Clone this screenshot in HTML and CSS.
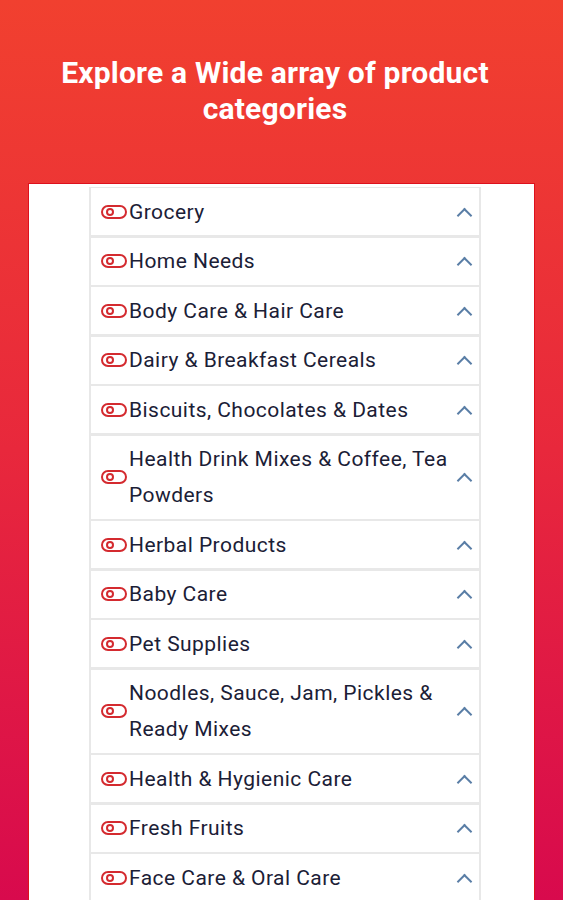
FILE: index.html
```html
<!DOCTYPE html>
<html lang="en">
<head>
<meta charset="utf-8">
<title>Categories</title>
<link rel="stylesheet" href="styles.css">
</head>
<body>
<div class="page">
  <h1 class="title">Explore a Wide array of product categories</h1>
  <div class="panel">
    <ul class="list">
      <li class="row"><span class="ic"></span><span class="label">Grocery</span><span class="chev"></span></li>
      <li class="row"><span class="ic"></span><span class="label">Home Needs</span><span class="chev"></span></li>
      <li class="row"><span class="ic"></span><span class="label">Body Care &amp; Hair Care</span><span class="chev"></span></li>
      <li class="row"><span class="ic"></span><span class="label">Dairy &amp; Breakfast Cereals</span><span class="chev"></span></li>
      <li class="row"><span class="ic"></span><span class="label">Biscuits, Chocolates &amp; Dates</span><span class="chev"></span></li>
      <li class="row"><span class="ic"></span><span class="label">Health Drink Mixes &amp; Coffee, Tea Powders</span><span class="chev"></span></li>
      <li class="row"><span class="ic"></span><span class="label">Herbal Products</span><span class="chev"></span></li>
      <li class="row"><span class="ic"></span><span class="label">Baby Care</span><span class="chev"></span></li>
      <li class="row"><span class="ic"></span><span class="label">Pet Supplies</span><span class="chev"></span></li>
      <li class="row"><span class="ic"></span><span class="label">Noodles, Sauce, Jam, Pickles &amp; Ready Mixes</span><span class="chev"></span></li>
      <li class="row"><span class="ic"></span><span class="label">Health &amp; Hygienic Care</span><span class="chev"></span></li>
      <li class="row"><span class="ic"></span><span class="label">Fresh Fruits</span><span class="chev"></span></li>
      <li class="row"><span class="ic"></span><span class="label">Face Care &amp; Oral Care</span><span class="chev"></span></li>
    </ul>
  </div>
</div>
</body>
</html>
```
FILE: styles.css
```css
html, body {
  margin: 0;
  padding: 0;
  height: 100%;
  overflow: hidden;
}
body {
  font-family: Roboto, "Liberation Sans", sans-serif;
}
.page {
  height: 900px;
  background: linear-gradient(to bottom, #f1402f 0%, #e8283c 50%, #d80a4d 100%);
  padding-top: 55px;
  box-sizing: border-box;
}
.title {
  margin: 0 0 0 35px;
  width: 480px;
  color: #ffffff;
  font-size: 30px;
  font-weight: 700;
  letter-spacing: 0.2px;
  line-height: 36px;
  text-align: center;
}
.panel {
  margin: 56px 0 0 28px;
  width: 507px;
  height: 760px;
  box-sizing: border-box;
  background: #ffffff;
  border-top: 1px solid #dd111d;
  border-left: 1px solid #dd111d;
  border-right: 1px solid #dd111d;
  padding: 3px 0 0 60px;
}
.list {
  list-style: none;
  margin: 0;
  padding: 1px 2px;
  width: 392px;
  box-sizing: border-box;
  background: #e8e8e8;
  display: flex;
  flex-direction: column;
  gap: 2.5px;
}
.row {
  background: #ffffff;
  display: flex;
  align-items: center;
  padding: 5.5px 0 5.5px 10px;
  min-height: 36px;
}
.ic {
  flex: none;
  width: 22px;
  height: 10px;
  border: 2px solid #d42a2f;
  border-radius: 8px;
  position: relative;
  margin-right: 2px;
}
.ic::after {
  content: "";
  position: absolute;
  left: 2.5px;
  top: 1px;
  width: 8px;
  height: 8px;
  border: 2px solid #d42a2f;
  border-radius: 50%;
  box-sizing: border-box;
}
.label {
  flex: 1;
  font-size: 21px;
  letter-spacing: 0.45px;
  line-height: 36px;
  color: #1b2036;
  padding-right: 2px;
}
.chev {
  flex: none;
  width: 28px;
  height: 14px;
  position: relative;
}
.chev::before {
  content: "";
  position: absolute;
  left: 8px;
  top: 5px;
  width: 11px;
  height: 11px;
  border-left: 2px solid #5a7ea6;
  border-top: 2px solid #5a7ea6;
  transform: rotate(45deg);
  box-sizing: border-box;
}
```
